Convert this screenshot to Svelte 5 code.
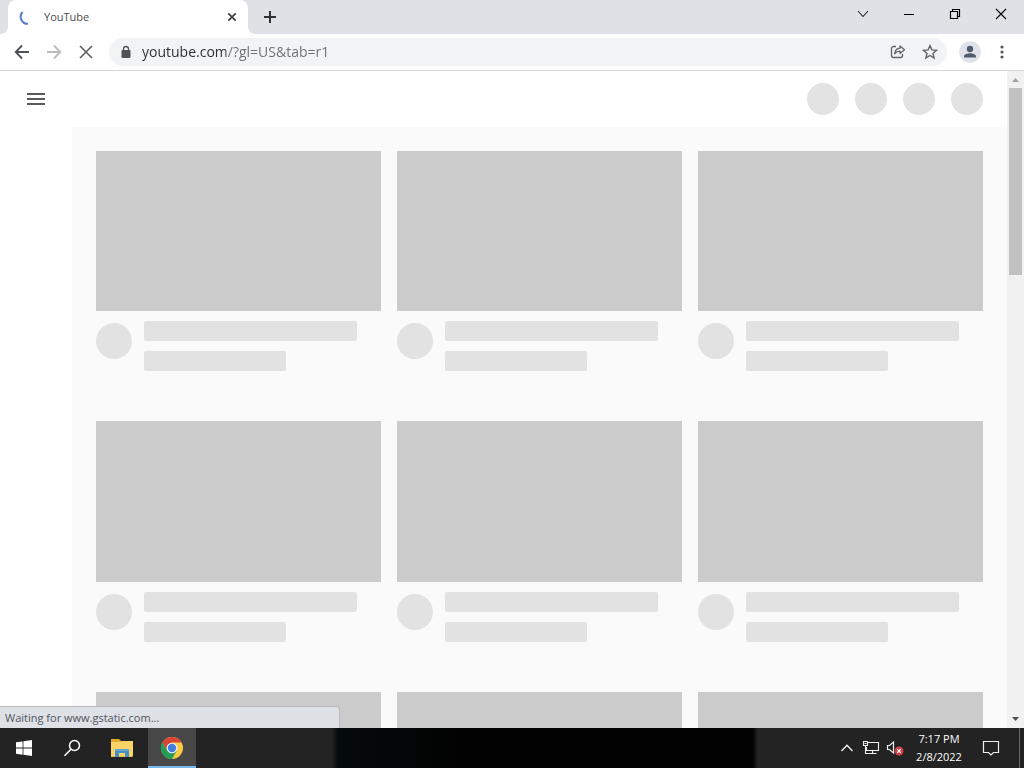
<script>
  const actions = [1, 2, 3, 4];
  const videos = Array.from({ length: 9 }, (_, i) => i);
  let address = $state('youtube.com/?gl=US&tab=r1');
</script>

<div class="desktop">
  <header class="tabstrip">
    <div class="tab">
      <svg width="16" height="16" viewBox="0 0 16 16" fill="none" stroke="#5b7bd0" stroke-width="2" aria-hidden="true">
        <path d="M4.6 3A7 7 0 0 0 10 14.800" />
      </svg>
      <span class="tab-title">YouTube</span>
      <button class="tab-close" aria-label="Close tab">
        <svg width="16" height="16" viewBox="0 0 16 16" stroke="#3c4043" stroke-width="1.7"><path d="M4.3 4.3l7.4 7.4M11.7 4.3l-7.4 7.4" /></svg>
      </button>
    </div>
    <button class="new-tab" aria-label="New tab">
      <svg width="16" height="16" viewBox="0 0 16 16" stroke="#303134" stroke-width="2"><path d="M8 2v12M2 8h12" /></svg>
    </button>
    <div class="window-controls">
      <button aria-label="Search tabs">
        <svg width="12" height="12" viewBox="0 0 12 12" fill="none" stroke="#222" stroke-width="1.1"><path d="M1 3l5 5.5L11 3" /></svg>
      </button>
      <button aria-label="Minimize">
        <svg width="12" height="12" viewBox="0 0 12 12" stroke="#000"><path d="M1 6.5h10" /></svg>
      </button>
      <button aria-label="Restore">
        <svg width="12" height="12" viewBox="0 0 12 12" fill="none" stroke="#000" stroke-width="1.2"><path d="M1.5 3.5h7v7h-7zM3.5 3.500V1.500h7v7h-2" /></svg>
      </button>
      <button aria-label="Close">
        <svg width="12" height="12" viewBox="0 0 12 12" stroke="#000" stroke-width="1.1"><path d="M1 1l10 10M11 1L1 11" /></svg>
      </button>
    </div>
  </header>

  <nav class="toolbar" aria-label="Browser">
    <button aria-label="Back">
      <svg width="16" height="16" viewBox="0 0 16 16" fill="none" stroke="#4d5156" stroke-width="1.8"><path d="M15 8H2M8 1.500L1.700 8 8 14.500" /></svg>
    </button>
    <button aria-label="Forward" disabled>
      <svg width="16" height="16" viewBox="0 0 16 16" fill="none" stroke="#babcbe" stroke-width="1.800"><path d="M1 8h13M8 1.500L14.300 8 8 14.500" /></svg>
    </button>
    <button aria-label="Stop loading">
      <svg width="16" height="16" viewBox="0 0 16 16" stroke="#5f6368" stroke-width="1.700"><path d="M2 2l12 12M14 2L2 14" /></svg>
    </button>
    <div class="omnibox">
      <svg class="lock" width="12" height="14" viewBox="0 0 12 14" aria-hidden="true">
        <rect x="1.500" y="5" width="9" height="8" rx="1" fill="#505357" />
        <path d="M3.500 6V4a2.500 2.500 0 0 1 5 0v2" fill="none" stroke="#505357" stroke-width="1.300" />
      </svg>
      <input aria-label="Address and search bar" bind:value={address} spellcheck="false" />
      <button aria-label="Share this page">
        <svg width="16" height="16" viewBox="0 0 16 16" fill="none" stroke="#5f6368" stroke-width="1.300" stroke-linejoin="round">
          <path d="M6 2.500H3.500a2 2 0 0 0-2 2v7a2 2 0 0 0 2 2h7a2 2 0 0 0 2-2V10" />
          <path d="M10 2l4.500 3.700L10 9.400V7.200C7.500 7.200 6 8 4.700 9.800 5 6.500 6.800 4.500 10 4.200z" />
        </svg>
      </button>
      <button aria-label="Bookmark this tab">
        <svg width="16" height="16" viewBox="0 0 16 16" fill="none" stroke="#5f6368" stroke-width="1.400"><path d="M8 1.600l1.900 4.300 4.700.4-3.600 3.100 1.100 4.600L8 11.500 3.900 14 5 9.400 1.400 6.300l4.700-.4z" /></svg>
      </button>
    </div>
    <button aria-label="Profile">
      <svg width="22" height="22" viewBox="0 0 22 22"><circle cx="11" cy="11" r="10.800" fill="#dfe2e8" /><circle cx="11" cy="8" r="3.200" fill="#505b6b" /><path d="M5 16.500v-1.300c0-2 3.600-3 6-3s6 1 6 3v1.300z" fill="#505b6b" /></svg>
    </button>
    <button aria-label="Browser menu">
      <svg width="16" height="16" viewBox="0 0 16 16" fill="#54575b"><circle cx="8" cy="3" r="1.600" /><circle cx="8" cy="8" r="1.600" /><circle cx="8" cy="13" r="1.600" /></svg>
    </button>
  </nav>

  <div class="viewport">
    <div class="page">
      <div class="masthead">
        <button class="guide" aria-label="Guide">
          <svg width="18" height="12" viewBox="0 0 18 12" fill="#5a5a5a"><path d="M0 0h18v2H0zM0 5h18v2H0zM0 10h18v2H0z" /></svg>
        </button>
        <div class="actions">
          {#each actions as action (action)}<span class="dot"></span>{/each}
        </div>
      </div>
      <main class="grid">
        {#each videos as video (video)}
          <article>
            <div class="thumb"></div>
            <div class="details">
              <div class="avatar"></div>
              <div class="lines">
                <div class="line title"></div>
                <div class="line meta"></div>
              </div>
            </div>
          </article>
        {/each}
      </main>
    </div>
    <div class="scrollbar" aria-hidden="true">
      <svg width="17" height="17" viewBox="0 0 17 17" fill="#a3a3a3"><path d="M5 11l3.500-4L12 11z" /></svg>
      <div class="track"><div class="handle"></div></div>
      <svg width="17" height="17" viewBox="0 0 17 17" fill="#505050"><path d="M5 6h7l-3.500 4z" /></svg>
    </div>
    <div class="status" role="status">Waiting for www.gstatic.com...</div>
  </div>

  <footer class="taskbar">
    <div class="apps">
      <button aria-label="Start">
        <svg width="16" height="16" viewBox="0 0 16 16" fill="#fff"><path d="M0 2.300L6.600 1.400v6.200H0zM7.400 1.300L16 0v7.600H7.400zM0 8.400h6.600v6.300L0 13.700zM7.400 8.400H16V16l-8.600-1.200z" /></svg>
      </button>
      <button aria-label="Search">
        <svg width="18" height="18" viewBox="0 0 18 18" fill="none" stroke="#fff" stroke-width="1.500"><circle cx="11.500" cy="6.500" r="5" /><path d="M8 10.200L1.500 16.800" /></svg>
      </button>
      <button class="spaced" aria-label="File Explorer">
        <svg width="22" height="20" viewBox="0 0 22 20"><path d="M0 1h8l2 2h11v16H0z" fill="#e3a92f" /><path d="M0 4h9l2-1h11v15.500H0z" fill="#fbd467" /><path d="M4 11h14v8h-4v-4H8v4H4z" fill="#4591c6" /><path d="M4 11h14v2H4z" fill="#61a6d2" /></svg>
      </button>
      <button class="spaced active" aria-label="Google Chrome">
        <svg width="22" height="22" viewBox="0 0 22 22"><circle cx="11" cy="11" r="11" fill="#f9cb45" /><path d="M1.470 5.500A11 11 0 0 0 11 22l4.760-8.250L11 11 6.240 13.750z" fill="#279b55" /><path d="M1.470 5.500A11 11 0 0 1 20.530 5.500H11L6.300 8.200 5.700 12.400z" fill="#dc4437" /><path d="M1.470 5.500L6.240 13.750 11 22A11 11 0 0 1 1.470 5.500z" fill="#279b55" /><circle cx="11" cy="11" r="5.300" fill="#f2f5fa" /><circle cx="11" cy="11" r="4.200" fill="#447de0" /></svg>
      </button>
    </div>
    <div class="tray">
      <button aria-label="Show hidden icons">
        <svg width="14" height="10" viewBox="0 0 14 10" fill="none" stroke="#eee" stroke-width="1.400"><path d="M1.500 8L7 2.200 12.500 8" /></svg>
      </button>
      <button aria-label="Network">
        <svg width="18" height="16" viewBox="0 0 18 16" fill="none" stroke="#eee" stroke-width="1.100"><path d="M5.500 2.500h11v8h-12V7M10.500 10.500v3M6.500 13.500h8M1.500 1.500h4v4h-4zM3.500 5.500v8h3M2.500 3.500h2" /></svg>
      </button>
      <button aria-label="Volume, unavailable">
        <svg width="18" height="16" viewBox="0 0 18 16" fill="none" stroke="#eee" stroke-width="1.200"><path d="M1.500 5.500h2L7.500 2v11L3.500 9.500h-2z" /><circle cx="13" cy="11" r="4.500" fill="#cf3f45" stroke="none" /><path d="M11.200 9.200l3.600 3.600M14.800 9.200l-3.600 3.600" stroke="#fff" /></svg>
      </button>
      <button class="clock"><span>7:17 PM</span><span>2/8/2022</span></button>
      <button class="notices" aria-label="Notifications">
        <svg width="18" height="18" viewBox="0 0 18 18" fill="none" stroke="#eee" stroke-width="1.200"><path d="M1.500 2.500h15v11h-5L9 16l-2.500-2.500h-5z" /></svg>
      </button>
      <button class="show-desktop" aria-label="Show desktop"></button>
    </div>
  </footer>
</div>

<style>
  :global(body) { margin: 0; }
  .desktop {
    display: flex;
    flex-direction: column;
    height: 100vh;
    overflow: hidden;
    background: #fff;
    color: #4a4d51;
    font: 11px/18px "Open Sans", "Noto Sans", sans-serif;
  }
  button {
    display: flex;
    align-items: center;
    justify-content: center;
    flex: none;
    padding: 0;
    border: 0;
    background: none;
    color: inherit;
    font: inherit;
  }
  svg { display: block; flex: none; }

  .tabstrip {
    display: flex;
    flex: none;
    height: 34px;
    padding-left: 8px;
    background: #dee1e6;
  }
  .tab {
    position: relative;
    display: flex;
    align-items: center;
    box-sizing: border-box;
    width: 240px;
    padding: 0 8px 0 10px;
    gap: 10px;
    border-radius: 8px 8px 0 0;
    background: #fff;
  }
  .tab::before,
  .tab::after {
    content: "";
    position: absolute;
    bottom: 0;
    width: 8px;
    height: 8px;
  }
  .tab::before { left: -8px; background: radial-gradient(circle at 0 0, transparent 8px, #fff 8px); }
  .tab::after { right: -8px; background: radial-gradient(circle at 100% 0, transparent 8px, #fff 8px); }
  .tab-title { flex: 1; }
  .tab-close { width: 16px; height: 16px; }
  .new-tab { width: 28px; margin-left: 8px; }
  .window-controls { display: flex; margin-left: auto; }
  .window-controls button { width: 46px; height: 28px; }

  .toolbar {
    display: flex;
    flex: none;
    align-items: center;
    height: 36px;
    padding: 0 6px;
    border-bottom: 1px solid #d5d7da;
  }
  .toolbar button { width: 32px; height: 28px; }
  .omnibox {
    display: flex;
    flex: 1;
    align-items: center;
    min-width: 0;
    height: 28px;
    margin: 0 7px;
    padding: 0 1px 0 11px;
    box-sizing: border-box;
    border-radius: 14px;
    background: #f1f3f4;
  }
  input {
    flex: 1;
    min-width: 0;
    margin-left: 10px;
    padding: 0;
    border: 0;
    outline: 0;
    background: linear-gradient(90deg, #2b2d30 84px, #6b6f73 84px);
    background-clip: text;
    -webkit-background-clip: text;
    color: #5f6368;
    -webkit-text-fill-color: transparent;
    font: 14px/20px "Open Sans", "Noto Sans", sans-serif;
  }

  .viewport {
    position: relative;
    display: flex;
    flex: 1;
    min-height: 0;
  }
  .page { flex: 1; min-width: 0; overflow: hidden; }
  .masthead {
    display: flex;
    align-items: center;
    justify-content: space-between;
    height: 56px;
    padding: 0 24px 0 16px;
  }
  .guide { width: 40px; height: 40px; }
  .actions { display: flex; gap: 16px; }
  .dot { width: 32px; height: 32px; border-radius: 50%; background: #e3e3e3; }
  .grid {
    display: grid;
    grid-template-columns: repeat(3, 1fr);
    gap: 50px 16px;
    margin-left: 72px;
    padding: 24px;
    background: #fafafa;
  }
  .thumb { aspect-ratio: 16 / 9; background: #cbcbcb; }
  .details { display: flex; gap: 12px; margin-top: 10px; }
  .avatar { flex: none; width: 36px; height: 36px; margin-top: 2px; border-radius: 50%; background: #e2e2e2; }
  .lines { flex: 1; }
  .line { height: 20px; border-radius: 2px; background: #e2e2e2; }
  .title { width: 90%; margin-bottom: 10px; }
  .meta { width: 60%; }

  .scrollbar {
    display: flex;
    flex: none;
    flex-direction: column;
    width: 17px;
    background: #f1f1f1;
  }
  .track { flex: 1; padding: 0 2px; }
  .handle { height: 30%; background: #c1c1c1; }
  .status {
    position: absolute;
    left: 0;
    bottom: 0;
    box-sizing: border-box;
    width: 340px;
    height: 22px;
    padding: 2px 5px;
    border: solid #b8babd;
    border-width: 1px 1px 0 0;
    border-radius: 0 4px 0 0;
    background: #dee1e6;
    color: #50545a;
  }

  .taskbar {
    display: flex;
    flex: none;
    justify-content: space-between;
    height: 40px;
    background: linear-gradient(90deg, #232323 32.4%, #040a0b 33%, #020202 45%, #020202 73.5%, #232323 74%);
    color: #fff;
  }
  .apps, .tray { display: flex; }
  .apps button { width: 48px; }
  .apps .spaced { margin-left: 2px; }
  .apps .active { box-sizing: border-box; padding-top: 2px; border-bottom: 2px solid #76b9ed; background: #484848; }
  .tray button { width: 24px; }
  .tray .clock { flex-direction: column; width: 56px; margin-left: 4px; }
  .tray .notices { width: 48px; margin-right: 4px; }
  .tray .show-desktop { width: 5px; border-left: 1px solid #666; box-sizing: border-box; }
</style>
